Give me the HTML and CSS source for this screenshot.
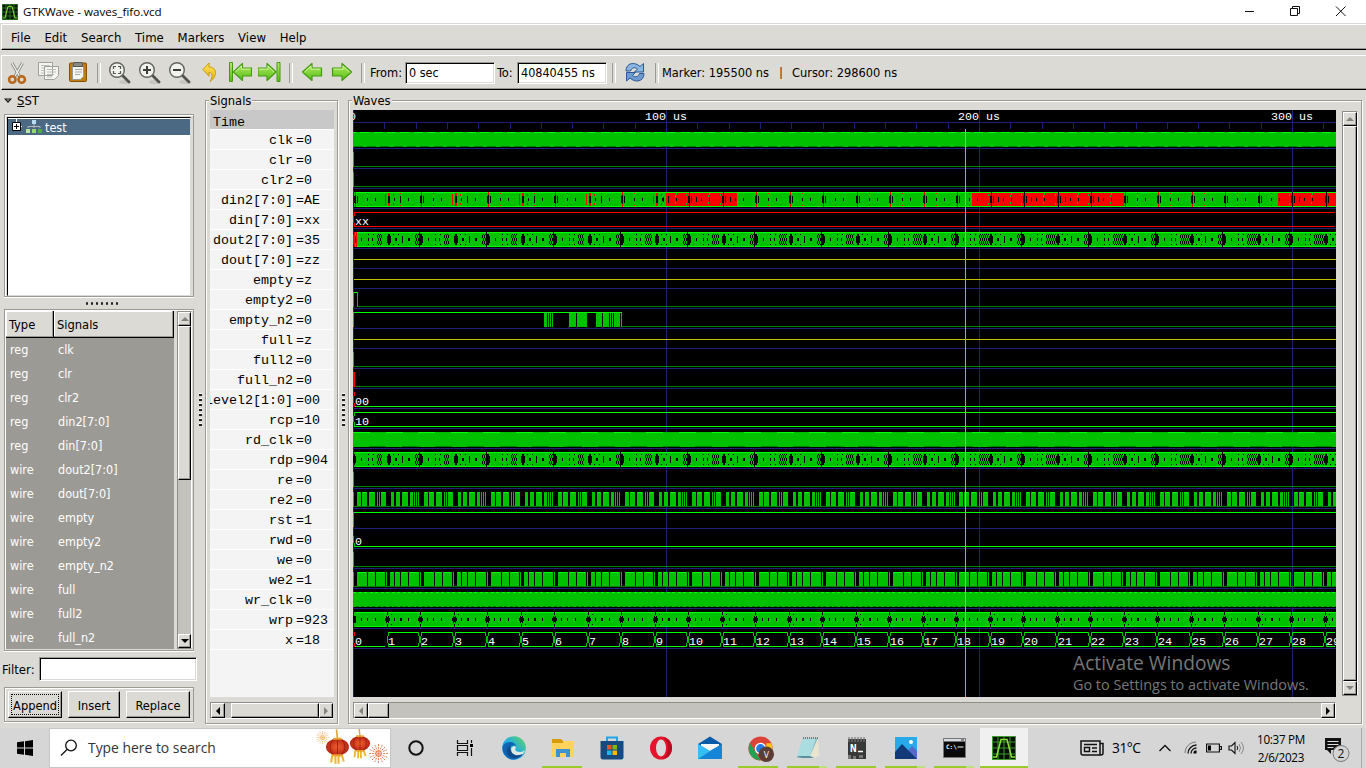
FILE: index.html
```html
<!DOCTYPE html>
<html lang="en">
<head>
<meta charset="utf-8">
<title>GTKWave - waves_fifo.vcd</title>
<link rel="stylesheet" href="styles.css">
</head>
<body>
<svg width="0" height="0" class="defs">
  <defs>
    <linearGradient id="grn" x1="0" y1="0" x2="0" y2="1"><stop offset="0" stop-color="#b4ec66"/><stop offset="1" stop-color="#55bd12"/></linearGradient>
    <linearGradient id="edge" x1="0" y1="1" x2="1" y2="0"><stop offset="0" stop-color="#087fd0"/><stop offset=".5" stop-color="#24aee0"/><stop offset="1" stop-color="#62d957"/></linearGradient>
    <linearGradient id="gold" x1="0" y1="0" x2="0" y2="1"><stop offset="0" stop-color="#ffe45a"/><stop offset="1" stop-color="#e5b512"/></linearGradient>
    <radialGradient id="lamp"><stop offset="0" stop-color="#f0602c"/><stop offset="1" stop-color="#bb2415"/></radialGradient>
    <symbol id="gtk" viewBox="0 0 24 24"><rect width="24" height="24" fill="#061006"/><path d="M.5 0v24M6 0v24M12 0v24M18 0v24M23.5 0v24M0 .5h24M0 6h24M0 12h24M0 18h24M0 23.5h24" stroke="#3b9a2a" fill="none"/><path d="M1 21h3.500L9 3.500h6L19.500 21H23" stroke="#8be03c" stroke-width="1.500" fill="none"/></symbol>
    <symbol id="lens" viewBox="0 0 24 24"><ellipse cx="17" cy="21" rx="6" ry="2" fill="#c6c5c0"/><path d="M14.500 14.500l6.500 6.500" stroke="#50524e" stroke-width="2.800" stroke-linecap="round"/><circle cx="9" cy="9" r="7.300" fill="#f1f1ed" stroke="#62645f" stroke-width="1.400"/></symbol>
    <symbol id="arrow" viewBox="0 0 24 24"><path d="M2.500 12L12 3.500V8h9.500v8H12v4.500z" fill="url(#grn)" stroke="#429b0e" stroke-width="1.200" stroke-linejoin="round"/><path d="M4.500 12L11 6v3.200h9.300" fill="none" stroke="#d1f59d"/></symbol>
    <symbol id="lantern" viewBox="0 0 24 34"><path d="M11 0l1 9" stroke="#dda33a" stroke-width="1.500"/><path d="M7 24l-1 8M10 24v9M13 24v9M16 24l2 7" stroke="#f0b62e" stroke-width="2"/><ellipse cx="12" cy="17" rx="11" ry="8" fill="url(#lamp)"/><path d="M8 9.500c-4 5-4 10 0 15M16 9.500c4 5 4 10 0 15M12 9v16" stroke="#8f2010" fill="none" stroke-width=".8"/><path d="M8 9h8M8 25h8" stroke="#e8a52c" stroke-width="2"/></symbol>
    <symbol id="spark" viewBox="0 0 20 20"><path d="M10 0v20M0 10h20M3 3l14 14M17 3L3 17M6 1l8 18M14 1L6 19M1 6l18 8M1 14l18-8" stroke-width="1" stroke-dasharray="2 1"/></symbol>
  </defs>
</svg>

<div class="screen">
  <header class="titlebar">
    <svg class="app-icon"><use href="#gtk"/></svg>
    <span class="title">GTKWave - waves_fifo.vcd</span>
    <svg class="winctl" viewBox="0 0 121 20"><path d="M0 9.500h9M45.500 6.500h7v7h-7zM47.500 6.500v-2h7v7h-2M91 4.500l9.500 9.500M100.500 4.500L91 14" fill="none" stroke="#111"/></svg>
  </header>
  <nav class="menubar"><span>File</span><span>Edit</span><span>Search</span><span>Time</span><span>Markers</span><span>View</span><span>Help</span></nav>
  <div class="toolbar">
    <div class="tool"><svg viewBox="0 0 24 24"><path d="M6 2l8.500 15M16.500 2L8 17" stroke="#888a85" stroke-width="3"/><path d="M6 2l8.500 15M16.500 2L8 17" stroke="#f2f2ee" stroke-width="1.300"/><ellipse cx="6.300" cy="18.500" rx="3.200" ry="3.300" fill="none" stroke="#b9681b" stroke-width="2.600"/><ellipse cx="15.700" cy="18.500" rx="3.200" ry="3.300" fill="none" stroke="#b9681b" stroke-width="2.600"/></svg></div>
    <div class="tool"><svg viewBox="0 0 24 24"><path d="M2.500 1.500h14v13h-14zM8.500 5.500h14v9l-4 4h-10z" fill="#f4f4f1" stroke="#a0a19c"/><path d="M5 4.500h9M5 7h3M5 9.500h3M5 12h3M11 8.500h9M11 11h9M11 13.500h7M11 16h5" stroke="#bcbdb8"/></svg></div>
    <div class="tool"><svg viewBox="0 0 24 24"><rect x="3.500" y="2" width="17" height="18.500" rx="1" fill="#c17d11" stroke="#855006"/><path d="M6.500 4.500h11v11l-3 3h-8z" fill="#f5f5f2" stroke="#999"/><path d="M8 1.500h8l1 4H7z" fill="#888a85" stroke="#555753"/><path d="M9 8.500h7M9 11h7M9 13.500h5" stroke="#a8a9a5"/></svg></div>
    <i class="sep"></i>
    <div class="tool"><svg viewBox="0 0 24 24"><use href="#lens"/><path d="M5.500 8V5.500H8M10 5.500h2.500V8M12.500 10v2.500H10M8 12.500H5.500V10" fill="none" stroke="#555753" stroke-width="1.200"/></svg></div>
    <div class="tool"><svg viewBox="0 0 24 24"><use href="#lens"/><path d="M5 9h8M9 5v8" stroke="#3c3e3b" stroke-width="2"/></svg></div>
    <div class="tool"><svg viewBox="0 0 24 24"><use href="#lens"/><path d="M5 9h8" stroke="#3c3e3b" stroke-width="2"/></svg></div>
    <div class="tool"><svg viewBox="0 0 24 24"><path d="M5 8.500L11 2v4c8 0 9 9 1 14.500 3-5 3-9-1-9v3.800z" fill="url(#gold)" stroke="#c59a0c" stroke-linejoin="round"/></svg></div>
    <div class="tool"><svg viewBox="0 0 24 24"><path d="M1.500 1.500h3v19h-3z" fill="url(#grn)" stroke="#429b0e"/><svg x="4" y="-1" width="21" height="24" viewBox="1 0 22 24" preserveAspectRatio="none"><use href="#arrow" width="24" height="24"/></svg></svg></div>
    <div class="tool"><svg viewBox="0 0 24 24"><g transform="translate(23.500 0) scale(-1 1)"><path d="M1.500 1.500h3v19h-3z" fill="url(#grn)" stroke="#429b0e"/><svg x="4" y="-1" width="21" height="24" viewBox="1 0 22 24" preserveAspectRatio="none"><use href="#arrow" width="24" height="24"/></svg></g></svg></div>
    <i class="sep"></i>
    <div class="tool"><svg viewBox="0 1 24 24"><use href="#arrow" width="24" height="24"/></svg></div>
    <div class="tool"><svg class="flip" viewBox="0 1 24 24"><use href="#arrow" width="24" height="24"/></svg></div>
    <i class="sep"></i>
    <label class="from">From:</label><div class="entry">0 sec</div>
    <label class="to">To:</label><div class="entry">40840455 ns</div>
    <i class="sep wide"></i>
    <div class="tool"><svg viewBox="0 0 24 24"><path d="M3 10C3 1.500 12 .5 17 5.500l3.500-3V11h-9l3-3c-3-2.500-6-1-7 2z" fill="#8bb4e0" stroke="#2c5a97" stroke-linejoin="round"/><path d="M21 12.500c0 8.500-9 9.500-14 4.500l-3.500 3v-8.500h9l-3 3c3 2.500 6 1 7-2z" fill="#6d9bd0" stroke="#2c5a97" stroke-linejoin="round"/></svg></div>
    <i class="sep wide"></i>
    <span class="marker">Marker: 195500 ns</span><b class="bar"></b><span>Cursor: 298600 ns</span>
  </div>

  <main class="workspace">
    <section class="sst">
      <div class="sst-head"><svg viewBox="0 0 8 6"><path d="M0 .5h8L4 5z" fill="#111"/><path d="M2.500 1.500h3L4 3z" fill="#ddd"/></svg><span><u>S</u>ST</span></div>
      <div class="frame tree"><div class="inset"><div class="node">
        <svg class="expander" viewBox="0 0 11 16"><path d="M5.500 0v4M9 7.500h2" stroke="#fff"/><path d="M1.500 3.500h8v8h-8z" fill="#fff" stroke="#000"/><path d="M3 7.500h5M5.500 5v5" stroke="#000"/></svg>
        <svg class="hier" viewBox="0 0 16 14"><path d="M2 8V6.500h12V8M8 4v4" stroke="#b4b8b8" fill="none"/><path d="M6 0h4v4H6z" fill="#b9dcf5"/><path d="M0 9h4v4H0z" fill="#b8e6a0"/><path d="M6 9h4v4H6z" fill="#98d578"/><path d="M12 9h4v4h-4z" fill="#4eae3d"/></svg>
        <span>test</span></div></div></div>
      <div class="grip horiz"></div>
      <div class="frame list">
        <div class="table"><div class="thead"><span>Type</span><span>Signals</span></div><div class="tbody" id="types"></div></div>
        <div class="vscroll"><i class="btn up off"></i><i class="thumb"></i><i class="btn down"></i></div>
      </div>
      <div class="filter"><label>Filter:</label><div class="entry"></div></div>
      <div class="frame actions"><button class="focus">Append</button><button>Insert</button><button>Replace</button></div>
    </section>
    <div class="grip vert g1"></div>
    <section class="group signals">
      <h2>Signals</h2>
      <div class="names"><div class="time">Time</div><div id="names"></div></div>
      <div class="hscroll"><i class="btn left"></i><i class="thumb"></i><i class="btn right off"></i></div>
    </section>
    <div class="grip vert g2"></div>
    <section class="group waves">
      <h2>Waves</h2>
      <div class="wave-row">
        <svg id="wave" width="983" height="587" shape-rendering="crispEdges"></svg>
        <div class="vscroll"><i class="btn up off"></i><i class="thumb"></i><i class="btn down off"></i></div>
      </div>
      <div class="hscroll"><i class="btn left off"></i><i class="thumb"></i><i class="btn right"></i></div>
      <div class="watermark"><p>Activate Windows</p><small>Go to Settings to activate Windows.</small></div>
    </section>
  </main>

  <footer class="taskbar">
    <div class="start"><svg viewBox="0 0 16 16"><path d="M0 2.300L7 1.300V7.500H0zM8 1.200L16 0v7.500H8zM0 8.500h7v6.200l-7-1zM8 8.500h8V16l-8-1.200z"/></svg></div>
    <div class="search">
      <svg class="mag" viewBox="0 0 18 18"><circle cx="11" cy="6.500" r="5.300" fill="none" stroke="#111" stroke-width="1.300"/><path d="M7 10.500L1 16.500" stroke="#111" stroke-width="1.300"/></svg>
      <span>Type here to search</span>
      <svg class="lanterns" viewBox="0 0 72 38"><use href="#spark" x="0" y="2" width="13" height="13" stroke="#e9a34f"/><use href="#lantern" x="9" y="-1" width="25" height="38"/><use href="#lantern" x="33" y="-3" width="22" height="35"/><use href="#spark" x="53" y="15" width="19" height="19" stroke="#e4794c"/></svg>
    </div>
    <div class="task"><svg viewBox="0 0 24 24"><circle cx="12" cy="12" r="6.700" fill="none" stroke="#111" stroke-width="2"/></svg></div>
    <div class="task"><svg viewBox="0 0 24 24"><path d="M4.500 4v3.500h10V4M4.500 20v-3.500h10V20M4.500 9.500h10v5h-10zM18.500 4v3M18.500 12v8" fill="none" stroke="#111" stroke-width="1.200"/><path d="M17 8h3v3h-3z"/></svg></div>
    <div class="task"><svg viewBox="0 0 24 24"><circle cx="12" cy="12" r="11.800" fill="url(#edge)"/><path d="M1 10C4 4 14 5 14 11c-1-2-5-2-6 1-1 5 5 9 13 6-5 7-14 7-18 1C1 16 0 13 1 10z" fill="#0d65b4"/><path d="M13 10c2 2-1 4 1 5 3 2 7 1 9-1l-2 4c-7 4-13 1-12-4 0-3 2-4 4-4z" fill="#dce9e5"/><path d="M9 14c1 6 8 6 12 4-4 5-12 5-15 1-3-5 0-9 3-10-1 1-1 3 0 5z" fill="#114b8b"/></svg></div>
    <div class="task run"><svg viewBox="0 0 24 24"><path d="M1 3h9l2 2h11v16H1z" fill="#ffd45c"/><path d="M1 3h9l2 2v2H1z" fill="#d89b0b"/><path d="M5 21v-8h14v8h-4v-4H9v4z" fill="#3e92d2"/></svg></div>
    <div class="task"><svg viewBox="0 0 24 24"><path d="M7 6V1.500h10V6" fill="none" stroke="#21a5e8" stroke-width="2"/><path d="M.5 5h23v16q0 2.500-2.500 2.500H3Q.5 23.500.5 21z" fill="#174b7f"/><path d="M7 9h4.500v4.500H7z" fill="#f25022"/><path d="M12.500 9H17v4.500h-4.500z" fill="#7fba00"/><path d="M7 14.500h4.500V19H7z" fill="#19b4ff"/><path d="M12.500 14.500H17V19h-4.500z" fill="#ffb900"/></svg></div>
    <div class="task"><svg viewBox="0 0 24 24"><ellipse cx="12" cy="12" rx="11" ry="11.500" fill="#e3142c"/><ellipse cx="12" cy="12" rx="5" ry="8.500" fill="#dadada"/><path d="M14 1c12 2 12 20 0 22 4-3 5-7 5-11s-1-8-5-11z" fill="#b70d20"/></svg></div>
    <div class="task"><svg viewBox="0 0 24 24"><path d="M0 8l12-7.500L24 8v4H0z" fill="#0b5bab"/><path d="M3 8h18v8H3z" fill="#f6f8fa"/><path d="M0 8l12 7 12-7v15H0z" fill="#28a8ea"/><path d="M24 8v15H0l12-8z" fill="#1585d8"/><path d="M0 8l12 7L0 23z" fill="#37bdf1"/></svg></div>
    <div class="task run"><svg class="big" viewBox="0 0 28 28"><circle cx="13" cy="13" r="12.500" fill="#db4437"/><path d="M2 7l6 10 5 8.500C3 25-2 15 2 7z" fill="#22a354"/><path d="M13 25.500l6-9V7.500h5c4 8-2 18-11 18z" fill="#fbc116"/><circle cx="13" cy="13" r="6" fill="#fff"/><circle cx="13" cy="13" r="4.600" fill="#2879e8"/><circle cx="19" cy="19" r="8" fill="#593d36"/><text x="19" y="22.500" text-anchor="middle" font-size="9" fill="#fff" font-family="Open Sans">V</text></svg></div>
    <div class="task run multi"><svg viewBox="0 0 24 24"><path d="M7 2h15l-4 20H1z" fill="#87bfc9"/><path d="M7 2h13l-6 18H1z" fill="#aadce0"/><path d="M22 2l1 18-5 2-4-2z" fill="#e9e4cf"/><path d="M7 2h15" stroke="#777" stroke-width="2" stroke-dasharray="1 1"/><path d="M1 20l13 0 4 2H6z" fill="#5a909e"/></svg></div>
    <div class="task run"><svg viewBox="0 0 24 24"><path d="M3 3h18v20H3z" fill="#383838"/><path d="M4 1v5M7 1v5M10 1v5M13 1v5M16 1v5M19 1v5" stroke="#777" stroke-width="1.200"/><text x="5" y="16" font-family="DejaVu Sans Mono" font-size="11" font-weight="bold" fill="#fff">N</text><path d="M13 15.500h5" stroke="#fff" stroke-width="1.500"/><path d="M3 19h3v4H3zM8 20h3v3H8zM14 19h4v3h-4z" fill="#777"/></svg></div>
    <div class="task run multi"><svg viewBox="0 0 24 24"><path d="M1 1h22v22H1z" fill="#27a9ea"/><path d="M12 17l6-7 5 5v8H14z" fill="#5669c9"/><path d="M1 16L8 8l15 15H1z" fill="#123a78"/><circle cx="17" cy="6" r="2" fill="#fff"/></svg></div>
    <div class="task run multi"><svg viewBox="0 0 24 24"><path d="M.5 2.500h22v19H.5z" fill="#090909" stroke="#777"/><path d="M1 3h21v2.500H1z" fill="#d7dae0"/><path d="M18 4h3" stroke="#333"/><text x="3" y="12.500" font-family="DejaVu Sans Mono" font-size="6" font-weight="bold" fill="#fff">C:\</text><path d="M14.500 11h6" stroke="#fff"/></svg></div>
    <div class="task run active"><svg><use href="#gtk"/></svg></div>
    <div class="tray">
      <svg class="news" viewBox="0 0 24 16"><path d="M1 1h19v14H3q-2 0-2-2zM20 3.500h3V13q0 2-2 2h-3" fill="none" stroke="#111" stroke-width="1.500"/><path d="M4 4.500h13M12 8h5M12 11.500h5" stroke="#111" stroke-width="1.400"/><path d="M4.500 7.500h5v4h-5z" fill="none" stroke="#111" stroke-width="1.400"/></svg>
      <span class="temp">31°C</span>
      <svg class="chev" viewBox="0 0 12 8"><path d="M.5 7L6 1.500 11.500 7" fill="none" stroke="#111" stroke-width="1.300"/></svg>
      <svg class="wifi" viewBox="0 0 14 14"><path d="M1 12C1 6 6 1 12 1" fill="none" stroke="#777"/><path d="M4 12.500C4 8 8 4 12.500 4M7 12.500c0-3 2.500-5.500 5.500-5.500M10 12.500Q10 10 12.500 10" fill="none" stroke="#111" stroke-width="1.300"/><path d="M10.500 10.500h2v2h-2z"/></svg>
      <svg class="batt" viewBox="0 0 16 10"><path d="M.6 1h12.800v8H.6zM14 3.500h1.400v3H14" fill="none" stroke="#111" stroke-width="1.200"/><path d="M2 2.500h3v5H2z"/></svg>
      <svg class="vol" viewBox="0 0 17 14"><path d="M1 5h2.500L7 1.500v11L3.500 9H1z" fill="none" stroke="#111" stroke-width="1.100"/><path d="M9 5q1.500 2 0 4" fill="none" stroke="#111"/><path d="M11 3q3 4 0 8M13 1q5 6 0 12" fill="none" stroke="#888"/></svg>
      <div class="clock"><span>10:37 PM</span><span>2/6/2023</span></div>
      <svg class="note" viewBox="0 0 26 26"><path d="M1 1h16v12H7v4l-4-4H1z" fill="#111"/><path d="M3.500 4.500h11M3.500 7.500h11M3.500 10.500h6" stroke="#ddd"/><circle cx="17" cy="16.500" r="8" fill="#d4d4d4" stroke="#777"/><text x="17" y="21" text-anchor="middle" font-family="Open Sans" font-size="12" fill="#111">2</text></svg>
      <i class="peek"></i>
    </div>
  </footer>
</div>
<script src="waves.js"></script>
</body>
</html>
```

FILE: styles.css
```css
* { box-sizing: border-box; }
body { margin: 0; overflow: hidden; background: #dcdad5; font: 12.5px/16px "DejaVu Sans Condensed", "DejaVu Sans", sans-serif; font-stretch: condensed; color: #000; }
svg { display: block; flex: none; }
.defs { position: absolute; }
.screen { width: 1366px; height: 768px; display: flex; flex-direction: column; }

.titlebar { height: 23px; background: #fff; display: flex; align-items: center; padding-left: 2px; font: 12px/20px "Open Sans", sans-serif; font-stretch: normal; }
.app-icon { width: 16px; height: 16px; margin-right: 5px; }
.title { font-size: 11.600px; white-space: nowrap; }
.winctl { width: 121px; height: 20px; margin-left: auto; }

.menubar { height: 26px; margin: 1px 0 0 1px; border-top: 1px solid #fff; border-left: 1px solid #fff; border-bottom: 1px solid #000; box-shadow: inset 0 -1px #9c9a94; display: flex; align-items: center; padding: 2px 0 0 9px; gap: 13.700px; white-space: nowrap; font-size: 13px; letter-spacing: .05px; }

.toolbar { height: 35px; margin: 5px 0 0 1px; border-top: 1px solid #fff; border-left: 1px solid #fff; border-bottom: 1px solid #000; box-shadow: inset 0 -1px #9c9a94; display: flex; align-items: center; padding-left: 1px; white-space: nowrap; font-size: 12.700px; }
.tool { width: 30px; height: 24px; display: flex; justify-content: center; flex: none; }
.tool > svg { width: 24px; height: 24px; }
.flip { transform: scaleX(-1); }
.sep { width: 12px; height: 20px; flex: none; display: flex; justify-content: center; }
.sep::before { content: ""; width: 2px; border-left: 1px solid #9c9a94; border-right: 1px solid #fff; }
.sep.wide { width: 13px; }
.from { width: 35px; margin-left: 1px; }
.to { width: 20px; margin-left: 2px; }
.entry { width: 90px; height: 22px; background: #fff; border: 1px solid #9c9a94; border-right-color: #fff; border-bottom-color: #fff; box-shadow: inset 1px 1px #000, inset -1px -1px #dcdad5; padding: 2px 3px; font-size: 12.500px; }
.marker { width: 119px; margin-left: -1px; }
.bar { width: 2px; height: 12px; margin-right: 10px; margin-left: -1px; background: linear-gradient(90deg, #cc7a30 50%, #738399 50%); }

.workspace { height: 638px; display: flex; align-items: flex-start; }
.sst { width: 197px; padding-left: 4px; display: flex; flex-direction: column; }
.sst-head { height: 24px; display: flex; align-items: center; gap: 5px; padding-bottom: 3px; font-size: 13px; }
.sst-head svg { width: 8px; height: 6px; }
.frame { width: 190px; border: 1px solid #9c9a94; box-shadow: inset 1px 1px #fff, 0 1px #fff; }
.tree { height: 183px; padding: 2px; }
.inset { height: 179px; background: #fff; border-left: 1px solid #000; border-top: 1px solid #000; border-right: 1px solid #dcdad5; border-bottom: 1px solid #dcdad5; padding-top: 1px; }
.node { height: 16px; background: #4b6983; color: #fff; display: flex; align-items: center; padding-left: 3px; }
.node span { padding-top: 1px; }
.expander { width: 11px; height: 16px; }
.hier { width: 16px; height: 14px; margin: 0 3px 0 4px; }

.grip.horiz { width: 34px; height: 3px; margin: 5px 0 4px 80px; background: radial-gradient(circle at 3px 1.500px, #222 1px, transparent 1.500px) 0 0 / 5px 3px; }
.grip.vert { width: 3px; height: 34px; flex: none; margin-top: 303px; background: repeating-linear-gradient(#fff 0 1px, #222 1px 3px, transparent 3px 5px); }
.g1 { margin-left: 2px; margin-right: 3px; }
.g2 { margin-left: 4px; margin-right: 3px; }

.list { height: 342px; display: flex; padding: 1px; }
.table { width: 168px; height: 338px; overflow: hidden; background: #9c9a94; color: #fff; }
.thead { height: 27px; display: flex; background: #dcdad5; color: #000; border-bottom: 1px solid #000; }
.thead span { padding: 6px 3px; border-right: 1px solid #000; box-shadow: inset -1px -1px #9c9a94, inset 1px 1px #fff; width: 48px; font-size: 12.800px; }
.thead span + span { width: 120px; }
.tbody div { height: 24px; display: flex; align-items: center; padding-left: 4px; }
.tbody span:first-child { width: 48px; }
.vscroll { width: 15px; background: #c4c2bd; border: 1px solid #8f8d88; border-right-color: #fff; display: flex; flex-direction: column; }
.list .vscroll { margin-left: 3px; height: 338px; }
.btn, .thumb { display: flex; background: #dcdad5; border: 1px solid #fff; border-right-color: #000; border-bottom-color: #000; box-shadow: inset -1px -1px #9c9a94; align-items: center; justify-content: center; flex: none; }
.btn { width: 13px; height: 14px; }
.btn::before { content: ""; border: 4px solid transparent; }
.up::before { border-bottom-color: #000; margin-top: -4px; }
.down::before { border-top-color: #000; margin-top: 4px; }
.left::before { border-right-color: #000; margin-left: -4px; }
.right::before { border-left-color: #000; margin-left: 4px; }
.up.off::before { border-bottom-color: #85837e; }
.down.off::before { border-top-color: #85837e; }
.left.off::before { border-right-color: #85837e; }
.right.off::before { border-left-color: #85837e; }
.list .thumb { width: 13px; height: 154px; }
.vscroll .down { margin-top: auto; }

.filter { display: flex; align-items: center; height: 24px; margin: 6px 0 0 -2px; }
.filter label { width: 37px; padding-top: 2px; font-size: 13px; }
.filter .entry { width: 158px; height: 24px; }
.actions { height: 35px; margin-top: 6px; display: flex; padding: 3px 3px; gap: 6px; }
button { font: inherit; font-size: 12.700px; font-stretch: condensed; color: #000; height: 27px; padding: 2px 0 0; width: 52px; border: 1px solid #fff; border-right-color: #000; border-bottom-color: #000; background: #dcdad5; box-shadow: inset -1px -1px #9c9a94; outline-offset: -4px; }
.focus { width: 54px; outline: 1px dotted #000; }
button:last-child { width: 64px; }

.group { position: relative; height: 624px; margin-top: 10px; border: 1px solid #9c9a94; box-shadow: inset 1px 1px #fff, 1px 1px #fff; padding: 9px 4px 0; flex: none; }
.group h2 { position: absolute; left: 3px; top: -8px; margin: 0; padding: 0 1px; background: #dcdad5; font: inherit; font-size: 12.800px; font-stretch: condensed; }
.signals { width: 133px; }
.names { width: 124px; height: 587px; overflow: hidden; background: #f4f4f4; font: 13.333px/20px "Liberation Mono", monospace; }
.time { height: 20px; background: #c8c8c8; border-bottom: 1px solid #fff; padding: 3px 3px 0; line-height: 20px; }
.names .sig { height: 20px; border-bottom: 1px solid #fff; display: flex; padding-top: 1px; }
.sig span:first-child { width: 83px; display: flex; justify-content: flex-end; }
.sig span:last-child { margin-left: 3px; }
.hscroll { height: 17px; margin-top: 5px; background: #c4c2bd; border: 1px solid #8f8d88; border-bottom-color: #fff; border-right-color: #fff; display: flex; }
.hscroll .btn { width: 14px; height: 15px; }
.hscroll .right { margin-left: auto; }
.signals .thumb { width: 88px; height: 15px; margin-left: 6px; }
.waves { width: 1014px; }
.waves .hscroll { width: 983px; }
.waves .hscroll .thumb { width: 21px; }
.wave-row { display: flex; }
.wave-row .vscroll { margin: 1px 0 0 6px; height: 585px; width: 16px; }
.wave-row .vscroll .btn { width: 14px; }
.wave-row .thumb { width: 14px; flex: 1; }
#wave { background: #000; font: 11.667px "Liberation Mono", monospace; }
#wave text { fill: #fff; }
.watermark { position: absolute; left: 724px; top: 550px; color: #777; font-family: "Open Sans", sans-serif; font-stretch: normal; white-space: nowrap; }
.watermark p { margin: 0; font-size: 19.200px; line-height: 24px; }
.watermark small { display: block; font-size: 14.400px; line-height: 20px; }

.taskbar { height: 40px; background: #d6d6d6; display: flex; font-family: "Open Sans", sans-serif; font-stretch: normal; }
.start { width: 49px; display: flex; align-items: center; justify-content: center; }
.start svg { width: 16px; height: 16px; }
.search { width: 342px; background: #fff; border: 1px solid #c6c6c6; display: flex; align-items: center; padding-left: 10px; color: #333; font-size: 13.900px; white-space: nowrap; }
.mag { width: 18px; height: 18px; margin-right: 10px; }
.lanterns { width: 72px; height: 38px; margin: 0 2px 0 auto; }
.task { width: 49px; position: relative; display: flex; align-items: center; justify-content: center; flex: none; }
.task svg { width: 24px; height: 24px; }
.task svg.big { width: 27px; height: 27px; margin-left: 5px; margin-top: 2px; }
.run::after { content: ""; position: absolute; left: 4px; bottom: 0; width: 40px; height: 2px; background: #9acb2c; }
.multi::after { background: linear-gradient(90deg, #9acb2c 32px, #bddf80 32px); }
.active { background: linear-gradient(90deg, transparent 1px, #f0f0f0 1px); }
.active::after { left: 1px; width: 48px; }
.tray { flex: 1; display: flex; align-items: center; padding-left: 52px; white-space: nowrap; }
.news { width: 24px; height: 16px; }
.temp { width: 30px; margin: 0 17px 0 8px; font-size: 13.800px; letter-spacing: -.5px; }
.chev { width: 12px; height: 8px; margin-right: 13px; }
.wifi { width: 14px; height: 14px; margin-right: 8px; }
.batt { width: 16px; height: 10px; margin-right: 6px; }
.vol { width: 17px; height: 14px; margin-right: 10px; }
.clock { width: 52px; display: flex; flex-direction: column; align-items: center; font-size: 11.700px; line-height: 18px; letter-spacing: -.3px; }
.note { width: 26px; height: 26px; margin: 4px 0 0 17px; }
.peek { width: 1px; height: 40px; background: #aaa; margin-left: auto; margin-right: 4px; }
```

FILE: waves.js
```js
(() => {
const signals = [
  ["clk", "0"], ["clr", "0"], ["clr2", "0"], ["din2[7:0]", "AE"], ["din[7:0]", "xx"],
  ["dout2[7:0]", "35"], ["dout[7:0]", "zz"], ["empty", "z"], ["empty2", "0"], ["empty_n2", "0"],
  ["full", "z"], ["full2", "0"], ["full_n2", "0"], ["level2[1:0]", "00"], ["rcp", "10"],
  ["rd_clk", "0"], ["rdp", "904"], ["re", "0"], ["re2", "0"], ["rst", "1"], ["rwd", "0"],
  ["we", "0"], ["we2", "1"], ["wr_clk", "0"], ["wrp", "923"], ["x", "18"]
];
document.getElementById("names").innerHTML = signals
  .map(([n, v]) => `<div class="sig"><span>${n}</span><span>=${v}</span></div>`).join("");
document.getElementById("types").innerHTML =
  ["clk", "clr", "clr2", "din2[7:0]", "din[7:0]", "dout2[7:0]", "dout[7:0]", "empty", "empty2", "empty_n2", "full", "full2", "full_n2"]
  .map((n, i) => `<div><span>${i < 5 ? "reg" : "wire"}</span><span>${n}</span></div>`).join("");

const W = 983, H = 587, STEP = 33.47, BASE = 1.5;
const FILL = "#00c000", HI = "#00ff00", LOW = "#008000", GRID = "#20207a", RED = "#ff0000", K = "#000";
let out = "";
const rect = (x, y, w, h, c) => {
  x = Math.round(x);
  if (x < W && w > 0) out += `<rect x="${x}" y="${y}" width="${w}" height="${h}" fill="${c}"/>`;
};
const text = (x, y, s) => { out += `<text x="${x}" y="${y}">${s}</text>`; };
const rowTop = i => 22 + 20 * i;
const edge = k => Math.round(BASE + STEP * k + (k % 2 ? 0.5 : 0));

for (let t = 0; t < 32; t++) rect(31.3 * t, 12, 1, t % 10 ? 7 : 1, GRID);
rect(0, 12, W, 1, GRID);
signals.forEach((_, i) => rect(0, rowTop(i) + 16, W, 1, GRID));
[0, 313, 626, 939].forEach(x => rect(x, 0, 1, H, GRID));
text(-4, 10, "0"); text(292, 10, "100 us"); text(605, 10, "200 us"); text(918, 10, "300 us");

function low(i) { rect(0, rowTop(i), 1, 15, FILL); rect(1, rowTop(i) + 14, W, 1, LOW); }
function clock(i, period, on, shift) {
  const y = rowTop(i);
  rect(0, y, W, 15, FILL);
  for (let x = shift; x < W; x += period) {
    rect(x, y, on, 1, HI);
    rect(x + period / 2, y + 14, on, 1, LOW);
  }
}
function busFill(i) {
  const y = rowTop(i);
  rect(1, y, W, 15, FILL); rect(3, y, W, 1, HI); rect(3, y + 14, W, 1, HI);
}
function diamond(x, y, w) {
  rect(x, y + 4, w, 7, K);
  if (w > 2) rect(x + 1, y + 2, w - 2, 11, K);
}
function hatch(x, y, w) {
  for (let c = 0; c < w; c++) {
    if (c % 2) { rect(x + c, y + 6, 1, 3, K); rect(x + c, y + 2, 1, 1, K); rect(x + c, y + 12, 1, 1, K); }
    else { rect(x + c, y + 3, 1, 3, K); rect(x + c, y + 9, 1, 3, K); }
  }
}
function pointer(i) {
  const y = rowTop(i);
  busFill(i);
  for (let p = 0; p < 15; p++) {
    const b = p * 66.94, grow = Math.min(5, Math.floor(b / 120));
    [8, 15, 19].forEach(o => rect(b + o, y + 6, 1, 3, K));
    hatch(b + 24, y, 5 + grow);
    diamond(b + 34, y, 4);
    rect(b + 42, y + 6, 2, 3, K);
    rect(b + 49, y + 4, 1, 7, K);
    rect(b + 55, y + 6, 2, 3, K);
    hatch(b + 62, y, 4); diamond(b + 66, y, 4); rect(b + 66, y, 1, 15, K);
    [15, 20, 40, 45].forEach(o => { rect(b + o, y + 2, 1, 1, K); rect(b + o, y + 12, 1, 1, K); });
  }
  diamond(0, y, 3);
}
function bursts(i, segs, period) {
  const y = rowTop(i);
  rect(0, y + 14, W, 1, LOW); rect(0, y, 1, 15, FILL);
  for (let b = 0; b < W; b += period) segs.forEach(([a, z]) => {
    rect(b + a, y, z - a, 14, FILL);
    if (z - a > 3) rect(b + a + 1, y, z - a - 2, 1, HI);
  });
}

clock(0, 13.35, 9, -6);
low(1); low(2);

// din2: steady green bus with spans of unknown data
{
  const y = rowTop(3);
  busFill(3);
  const spans = [[313, 384], [619, 771], [925, 983]];
  spans.forEach(([a, z]) => rect(a, y + 1, z - a, 13, RED));
  const inRed = x => spans.some(([a, z]) => x >= a && x < z);
  for (let k = 0; k < 30; k++) {
    const b = edge(k);
    [12, 20].forEach(o => rect(b + o, y + 6, 1, 3, K));
    rect(b + 12, y + 1, 1, 1, RED); rect(b + 12, y + 13, 1, 1, RED);
    if (k % 2 && b < 313) {
      rect(b - 3, y + 2, 1, 11, RED); rect(b, y + 1, 2, 3, RED); rect(b, y + 11, 2, 3, RED); rect(b, y + 4, 2, 7, K);
      rect(b + 5, y + 2, 1, 2, RED); rect(b + 5, y + 11, 1, 2, RED);
      rect(b + 6, y + 6, 1, 3, K); rect(b + 12, y + 4, 1, 7, K);
    } else {
      rect(b, y, 1, 3, RED); rect(b, y + 12, 1, 3, RED);
      rect(b - 1, y + 4, 1, 7, K); rect(b, y + 3, 1, 9, K); rect(b + 2, y + 4, 1, 7, K);
      if (inRed(b)) rect(b, y, 1, 15, K);
    }
    if (inRed(b + 12)) {
      rect(b + 19, y + 3, 1, 2, FILL); rect(b + 20, y + 1, 1, 2, FILL); rect(b + 19, y + 10, 1, 2, FILL);
      rect(b - 3, y + 2, 1, 2, FILL); rect(b - 3, y + 11, 1, 2, FILL); rect(b + 7, y + 5, 1, 5, K);
    }
  }
}
// din: unknown for the whole trace
{
  const y = rowTop(4);
  rect(1, y, W - 2, 1, RED); rect(1, y + 14, W - 2, 1, RED);
  rect(1, y, 1, 4, RED); rect(0, y + 4, 1, 7, RED); rect(1, y + 11, 1, 4, RED);
  text(2, y + 13, "xx");
}
pointer(5);
rect(0, rowTop(5) + 3, 1, 9, RED); rect(1, rowTop(5), 1, 15, RED); rect(3, rowTop(5), 1, 15, RED);
[6, 7, 10].forEach(i => rect(1, rowTop(i) + 7, W, 1, "#c0c000"));
rect(0, rowTop(8), 5, 1, HI); rect(0, rowTop(8), 1, 15, FILL); rect(4, rowTop(8), 1, 15, FILL); rect(5, rowTop(8) + 14, W, 1, LOW);
{
  const y = rowTop(9);
  rect(0, y, 1, 15, FILL); rect(269, y + 14, W, 1, LOW);
  [[191, 194], [195, 196], [197, 198], [199, 200], [216, 223], [224, 234], [243, 249], [250, 256], [257, 258], [259, 260], [261, 267], [268, 269]]
    .forEach(([a, z]) => rect(a, y, z - a, 15, FILL));
  rect(0, y, 269, 1, HI);
}
low(11); low(12); rect(0, rowTop(12), 2, 15, RED);
{
  const y = rowTop(13);
  rect(1, y + 14, W, 1, HI); rect(1, y, 1, 4, RED); rect(0, y + 4, 1, 7, RED); rect(1, y + 11, 1, 4, RED);
  text(2, y + 13, "00");
}
{
  const y = rowTop(14);
  rect(1, y, W, 1, HI); rect(1, y + 14, W, 1, HI); rect(1, y, 1, 4, FILL); rect(0, y + 4, 1, 6, FILL); rect(1, y + 10, 1, 4, FILL);
  text(2, y + 13, "10");
}
clock(15, 32.6, 17, 0);
pointer(16);
low(17);
bursts(18, [[4, 8], [9, 14], [16, 22], [24, 25], [26, 27], [28, 33], [38, 41], [43, 47], [49, 55], [57, 60], [61, 62], [63, 64], [65, 66]], 66.94);
rect(0, rowTop(19), W, 1, HI); rect(0, rowTop(19), 1, 15, FILL);
rect(1, rowTop(20) + 14, W, 1, HI); rect(0, rowTop(20) + 4, 1, 7, FILL); rect(1, rowTop(20) + 11, 1, 4, FILL);
text(2, rowTop(20) + 13, "0");
low(21);
bursts(22, [[4, 14], [15, 22], [23, 32], [33, 34], [37, 41], [42, 47], [48, 55], [56, 66], [67, 68]], 66.94);
clock(23, 5.5, 3, 0);
{
  const y = rowTop(24);
  busFill(24);
  rect(0, y + 4, 3, 7, K);
  for (let k = 0; k < 30; k++) {
    const b = edge(k);
    rect(b + 6, y + 6, 1, 3, K);
    rect(b + 12, y + 6, k % 2 ? 2 : 1, 3, K);
    rect(b + 20, y + 6, 1, 3, K);
    if (k) {
      rect(b - 1, y, 1, 15, K); rect(b - 2, y + 4, 1, 7, K); rect(b, y + 4, 1, 7, K); rect(b - 3, y + 6, 5, 3, K);
      rect(b - 1, y + 3, 1, 2, FILL); rect(b - 1, y + 10, 1, 2, FILL);
    }
    if (k % 2) { rect(b + 3, y + 2, 1, 1, K); rect(b + 3, y + 12, 1, 1, K); }
  }
}
{
  const y = rowTop(25);
  rect(1, y, 1, 4, RED); rect(0, y + 4, 1, 7, RED); rect(1, y + 11, 1, 4, RED);
  for (let k = 0; k < 30; k++) {
    const a = edge(k), z = Math.min(edge(k + 1) - 3, W - 1);
    if (k) rect(a, y, z - a, 1, HI);
    rect(a, y + 14, z - a, 1, HI);
    if (k) {
      rect(a, y, 1, 4, FILL); rect(a, y + 11, 1, 4, FILL); rect(a - 1, y + 4, 1, 7, FILL);
      if (k > 1) { rect(a - 3, y, 1, 4, FILL); rect(a - 3, y + 11, 1, 4, FILL); rect(a - 2, y + 4, 1, 7, FILL); }
    }
    text(k ? a : 2, y + 13, k);
  }
}
rect(612, 19, 1, H - 19, "#ff8080");
document.getElementById("wave").innerHTML = out;
})();
```
